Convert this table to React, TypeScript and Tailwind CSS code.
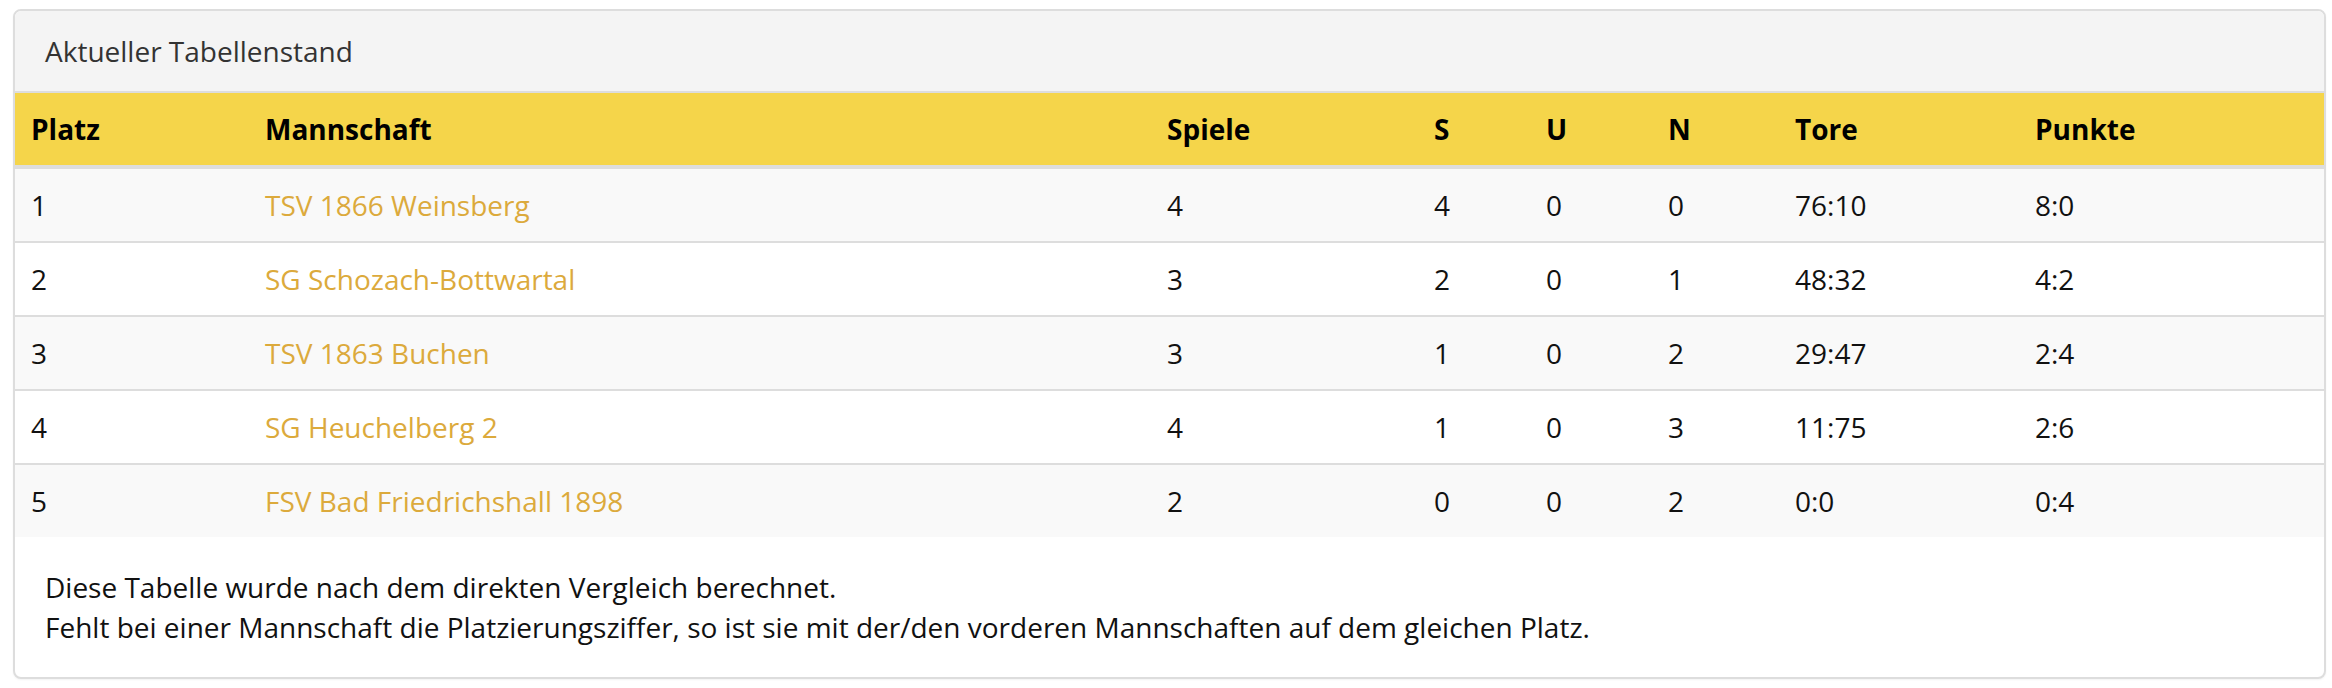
import React from "react";

const rows = [
  { p: "1", team: "TSV 1866 Weinsberg", sp: "4", s: "4", u: "0", n: "0", tore: "76:10", pkt: "8:0" },
  { p: "2", team: "SG Schozach-Bottwartal", sp: "3", s: "2", u: "0", n: "1", tore: "48:32", pkt: "4:2" },
  { p: "3", team: "TSV 1863 Buchen", sp: "3", s: "1", u: "0", n: "2", tore: "29:47", pkt: "2:4" },
  { p: "4", team: "SG Heuchelberg 2", sp: "4", s: "1", u: "0", n: "3", tore: "11:75", pkt: "2:6" },
  { p: "5", team: "FSV Bad Friedrichshall 1898", sp: "2", s: "0", u: "0", n: "2", tore: "0:0", pkt: "0:4" },
];

export default function App() {
  return (
    <div className="bg-white w-[2332px] h-[688px] pt-[9px] pl-[13px] pr-[6px] font-['Open_Sans',sans-serif] text-[28px] leading-[40px] text-[#111]">
      <div className="border-2 border-[#dddddd] rounded-[8px] overflow-hidden bg-white shadow-[0_1px_2px_rgba(0,0,0,0.05)]">
        <div className="bg-[#f4f4f4] border-b-2 border-[#dddddd] px-[30px] py-[20px] text-[#333]">
          Aktueller Tabellenstand
        </div>
        <table className="w-full table-fixed border-collapse">
          <colgroup>
            <col className="w-[234px]" />
            <col className="w-[902px]" />
            <col className="w-[267px]" />
            <col className="w-[112px]" />
            <col className="w-[122px]" />
            <col className="w-[127px]" />
            <col className="w-[240px]" />
            <col />
          </colgroup>
          <thead>
            <tr className="bg-[#f5d54a] text-black">
              {["Platz", "Mannschaft", "Spiele", "S", "U", "N", "Tore", "Punkte"].map((h) => (
                <th key={h} className="text-left font-bold px-[16px] py-[16px] h-[72px] border-b-4 border-[#dddddd]">
                  {h}
                </th>
              ))}
            </tr>
          </thead>
          <tbody>
            {rows.map((r, i) => (
              <tr key={r.p} className={i % 2 === 0 ? "bg-[#f9f9f9]" : "bg-white"}>
                {[r.p, r.team, r.sp, r.s, r.u, r.n, r.tore, r.pkt].map((c, j) => (
                  <td
                    key={j}
                    className={`px-[16px] py-[16px] h-[72px] align-top ${i > 0 ? "border-t-2 border-[#dddddd]" : ""} ${
                      j === 1 ? "text-[#dcaa3c]" : ""
                    }`}
                  >
                    {c}
                  </td>
                ))}
              </tr>
            ))}
          </tbody>
        </table>
        <div className="p-[30px]">
          <div>Diese Tabelle wurde nach dem direkten Vergleich berechnet.</div>
          <div>
            Fehlt bei einer Mannschaft die Platzierungsziffer, so ist sie mit der/den vorderen Mannschaften auf dem gleichen
            Platz.
          </div>
        </div>
      </div>
    </div>
  );
}
